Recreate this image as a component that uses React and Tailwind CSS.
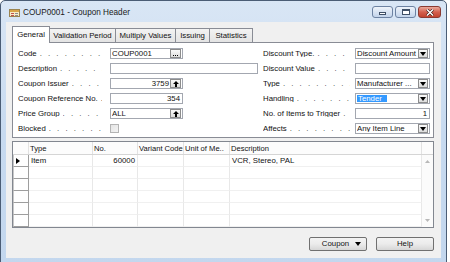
import React from 'react';

const DOTS = '. . . . . . . . . . . . . . . . . . . . . .';

const Label = ({ text, pr = 'pr-[8px]' }) => (
  <div className={`w-[92px] flex items-center overflow-hidden ${pr}`}>
    <span className="whitespace-nowrap">{text}</span>
    <span className="flex-1 min-w-0 overflow-hidden whitespace-nowrap ml-[3px] tracking-[2px] text-[#333]">{DOTS}</span>
  </div>
);

const DropBtn = () => (
  <span className="shrink-0 w-[10px] h-[9px] border border-[#8c8c8c] bg-gradient-to-b from-[#fafafa] to-[#dcdcdc] flex items-center justify-center">
    <svg width="6" height="4" viewBox="0 0 6 4"><path d="M0 0h6L3 4z" fill="#000" /></svg>
  </span>
);

const LookupBtn = () => (
  <span className="shrink-0 w-[11px] h-[9px] border border-[#8c8c8c] bg-gradient-to-b from-[#fafafa] to-[#dcdcdc] flex items-center justify-center">
    <svg width="6" height="6" viewBox="0 0 6 6"><path d="M3 0l3 3H4v3H2V3H0z" fill="#000" /></svg>
  </span>
);

const AssistBtn = () => (
  <span className="shrink-0 w-[11px] h-[9px] border border-[#8c8c8c] bg-gradient-to-b from-[#fafafa] to-[#dcdcdc] flex items-end justify-center pb-[1px] gap-[1px]">
    <span className="w-[1px] h-[1px] bg-black" />
    <span className="w-[1px] h-[1px] bg-black" />
    <span className="w-[1px] h-[1px] bg-black" />
  </span>
);

const Field = ({ w, right, children, btn }) => (
  <div className={`${w} h-[11px] border border-[#a3a7b0] bg-white flex items-center pl-[1px] pr-[1px]`}>
    <span className={`flex-1 min-w-0 whitespace-nowrap overflow-hidden ${right ? 'text-right pr-[1px]' : ''}`}>{children}</span>
    {btn}
  </div>
);

const leftRows = [
  { label: 'Code', field: <Field w="w-[73px]" btn={<AssistBtn />}>COUP0001</Field> },
  { label: 'Description', field: <Field w="w-[148px]" /> },
  { label: 'Coupon Issuer', field: <Field w="w-[73px]" right btn={<LookupBtn />}>3759</Field> },
  { label: 'Coupon Reference No.', field: <Field w="w-[73px]" right>354</Field> },
  { label: 'Price Group', field: <Field w="w-[73px]" btn={<LookupBtn />}>ALL</Field> },
  {
    label: 'Blocked',
    field: <span className="w-[9px] h-[9px] border border-[#b4b4b4] bg-gradient-to-br from-[#e4e4e4] to-[#f4f4f4]" />,
  },
];

const rightRows = [
  { label: 'Discount Type.', field: <Field w="w-[75px]" btn={<DropBtn />}>Discount Amount</Field> },
  { label: 'Discount Value', field: <Field w="w-[75px]" /> },
  { label: 'Type', field: <Field w="w-[75px]" btn={<DropBtn />}>Manufacturer ...</Field> },
  {
    label: 'Handling',
    field: (
      <Field w="w-[75px]" btn={<DropBtn />}>
        <span className="bg-[#3399ff] text-white pl-[1px] pr-[5px]">Tender</span>
      </Field>
    ),
  },
  { label: 'No. of Items to Trigger', field: <Field w="w-[75px]" right>1</Field> },
  { label: 'Affects', field: <Field w="w-[75px]" btn={<DropBtn />}>Any Item Line</Field> },
];

const tabs = [
  { name: 'General', w: 'w-[38px]', active: true },
  { name: 'Validation Period', w: 'w-[67px]' },
  { name: 'Multiply Values', w: 'w-[61px]' },
  { name: 'Issuing', w: 'w-[35px]' },
  { name: 'Statistics', w: 'w-[44px]' },
];

const cols = [
  { name: 'Type', w: 'w-[64px]' },
  { name: 'No.', w: 'w-[45px]' },
  { name: 'Variant Code', w: 'w-[46px]' },
  { name: 'Unit of Me..', w: 'w-[46px]' },
  { name: 'Description', w: 'w-[192px]' },
];

const rows = [
  ['Item', '60000', '', '', 'VCR, Stereo, PAL'],
  ['', '', '', '', ''],
  ['', '', '', '', ''],
  ['', '', '', '', ''],
  ['', '', '', '', ''],
  ['', '', '', '', ''],
];

export default function App() {
  return (
    <div className="w-[450px] h-[262px] overflow-hidden bg-white font-['Liberation_Sans',Arial,sans-serif] text-[7.8px] leading-none text-[#111]">
      <div className="w-[447px] h-[270px] border border-[#4b5d75] rounded-t-[5px] bg-gradient-to-b from-[#d9e6f5] via-[#c7daf0] to-[#c3d7ee] px-[5px] flex flex-col">
        {/* Title bar */}
        <div className="h-[21px] flex items-start">
          <div className="flex items-center pt-[8px] pl-[3px]">
            <svg width="11" height="8" viewBox="0 0 11 8">
              <rect x="0.5" y="0.5" width="10" height="7" fill="#f6ebc6" stroke="#9a8450" />
              <rect x="1" y="1" width="9" height="2" fill="#d9a548" />
              <rect x="2" y="4" width="3" height="1" fill="#c0504d" />
              <rect x="6" y="4" width="3" height="1" fill="#8c8c8c" />
              <rect x="2" y="6" width="3" height="1" fill="#c0504d" />
              <rect x="6" y="6" width="3" height="1" fill="#8c8c8c" />
            </svg>
            <span className="ml-[3px] text-[8.2px] text-[#1a1a1a]">COUP0001 - Coupon Header</span>
          </div>
          <div className="ml-auto pt-[5px] flex gap-[2px]">
            <div className="w-[21px] h-[12px] rounded-[3px] border border-[#6d82a2] bg-gradient-to-b from-[#eef3fa] to-[#c3d4eb] flex items-end justify-center pb-[2px]">
              <span className="w-[7px] h-[3px] bg-white border border-[#3f4f66]" />
            </div>
            <div className="w-[21px] h-[12px] rounded-[3px] border border-[#6d82a2] bg-gradient-to-b from-[#eef3fa] to-[#c3d4eb] flex items-center justify-center">
              <span className="w-[8px] h-[6px] bg-white border border-[#3f4f66] border-t-2" />
            </div>
            <div className="w-[23px] h-[12px] rounded-[3px] border border-[#8a3a32] bg-gradient-to-b from-[#e9a99c] via-[#d4604f] to-[#c2432f] flex items-center justify-center">
              <svg width="8" height="7" viewBox="0 0 8 7">
                <path d="M1 0.5l6 6M7 0.5l-6 6" stroke="#3a1410" strokeWidth="2.6" />
                <path d="M1 0.5l6 6M7 0.5l-6 6" stroke="#fff" strokeWidth="1.5" />
              </svg>
            </div>
          </div>
        </div>

        {/* Client area */}
        <div className="h-[236px] bg-[#f0f0f0] pl-[6px] pr-[7px] pt-[4px] flex flex-col">
          {/* Tabs */}
          <div className="h-[17px] flex items-end -mb-px">
            {tabs.map((t, i) => (
              <div
                key={t.name}
                className={`${t.w} ${i ? '-ml-px' : ''} border border-b-0 border-[#898c95] flex items-center justify-center whitespace-nowrap ${
                  t.active ? 'h-[17px] bg-white relative z-10' : 'h-[15px] bg-gradient-to-b from-[#f3f3f3] to-[#e2e2e2]'
                }`}
              >
                {t.name}
              </div>
            ))}
          </div>

          {/* Tab panel */}
          <div className="h-[96px] border border-[#898c95] bg-white pl-[5px] pt-[3px] flex">
            <div className="w-[240px] flex flex-col">
              {leftRows.map((r) => (
                <div key={r.label} className="h-[15px] flex items-center">
                  <Label text={r.label} />
                  {r.field}
                </div>
              ))}
            </div>
            <div className="ml-[5px] w-[167px] flex flex-col">
              {rightRows.map((r) => (
                <div key={r.label} className="h-[15px] flex items-center">
                  <Label text={r.label} pr="pr-[5px]" />
                  {r.field}
                </div>
              ))}
            </div>
          </div>

          {/* Lines table */}
          <div className="mt-[3px] w-[422px] border border-[#828790] bg-white flex flex-col">
            <div className="h-[13px] flex border-b border-[#d5d5d5] bg-[#fcfcfc] text-[7.6px]">
              <div className="w-[16px] border-r border-[#e2e2e2]" />
              {cols.map((c) => (
                <div key={c.name} className={`${c.w} border-r border-[#e2e2e2] flex items-center pl-[1px] pt-[2px] whitespace-nowrap`}>
                  {c.name}
                </div>
              ))}
              <div className="flex-1" />
            </div>
            <div className="flex">
              <div className="flex flex-col">
                {rows.map((r, i) => (
                  <div key={i} className="h-[12px] flex">
                    <div className="w-[16px] border border-t-0 border-[#9e9e9e] border-l-[#c8c8c8] bg-white flex items-center pl-[2px]">
                      {i === 0 && (
                        <svg width="4" height="6" viewBox="0 0 4 6"><path d="M0 0l4 3-4 3z" fill="#000" /></svg>
                      )}
                    </div>
                    {cols.map((c, j) => (
                      <div
                        key={c.name}
                        className={`${c.w} border-r border-b border-r-[#e8e8e8] border-b-[#f0f0f0] flex items-center px-[2px] whitespace-nowrap overflow-hidden ${
                          j === 1 ? 'justify-end' : ''
                        }`}
                      >
                        {r[j]}
                      </div>
                    ))}
                  </div>
                ))}
              </div>
              <div className="flex-1 bg-[#fbfbfb] flex flex-col items-center justify-between py-[5px]">
                <svg width="5" height="3" viewBox="0 0 5 3"><path d="M0 3h5L2.5 0z" fill="#b8b8b8" /></svg>
                <svg width="5" height="3" viewBox="0 0 5 3"><path d="M0 0h5L2.5 3z" fill="#b8b8b8" /></svg>
              </div>
            </div>
          </div>

          {/* Buttons */}
          <div className="mt-[9px] w-[422px] flex justify-end gap-[9px]">
            <div className="w-[58px] h-[14px] rounded-[2px] border border-[#707070] bg-gradient-to-b from-[#f3f3f3] via-[#ebebeb] to-[#d6d6d6] flex items-center">
              <span className="flex-1 text-center pl-[6px]">Coupon</span>
              <svg className="mr-[5px]" width="6" height="4" viewBox="0 0 6 4"><path d="M0 0h6L3 4z" fill="#000" /></svg>
            </div>
            <div className="w-[58px] h-[14px] rounded-[2px] border border-[#707070] bg-gradient-to-b from-[#f3f3f3] via-[#ebebeb] to-[#d6d6d6] flex items-center justify-center">
              Help
            </div>
          </div>
        </div>
      </div>
    </div>
  );
}
